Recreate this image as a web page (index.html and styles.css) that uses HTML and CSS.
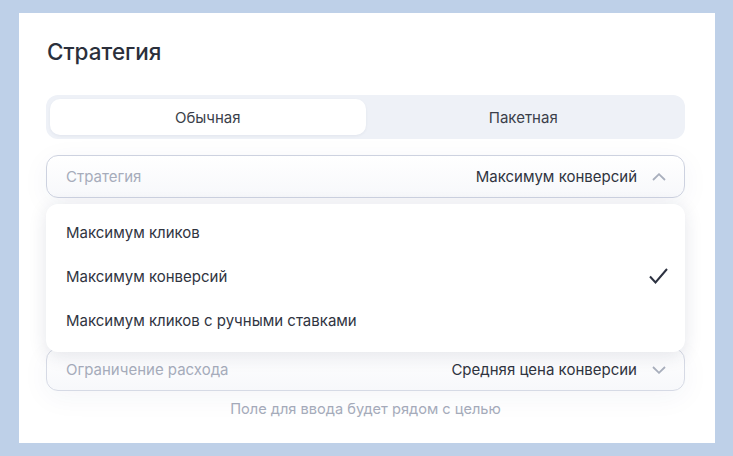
FILE: index.html
```html
<!DOCTYPE html>
<html lang="ru">
<head>
    <meta charset="UTF-8">
    <meta name="viewport" content="width=device-width, initial-scale=1.0">
    <title>Стратегия</title>
    <link rel="stylesheet" href="styles.css">
</head>
<body>
    <div class="card">
        <h1 class="title">Стратегия</h1>

        <div class="segment">
            <button class="segment-tab active">Обычная</button>
            <button class="segment-tab">Пакетная</button>
        </div>

        <div class="fields">
            <div class="select open">
                <span class="select-label">Стратегия</span>
                <span class="select-value">Максимум конверсий</span>
                <svg class="chevron" width="14" height="8" viewBox="0 0 14 8"><path d="M1 7L7 1.2L13 7" fill="none" stroke="#a9afbd" stroke-width="1.8"/></svg>
            </div>

            <div class="dropdown">
                <div class="option">Максимум кликов</div>
                <div class="option selected">
                    Максимум конверсий
                    <svg class="check" width="19" height="16" viewBox="0 0 19 16"><path d="M1 8.5L6.5 14.5L18 1" fill="none" stroke="#2c3140" stroke-width="2"/></svg>
                </div>
                <div class="option">Максимум кликов с ручными ставками</div>
            </div>

            <div class="goal-slot"></div>

            <div class="select">
                <span class="select-label">Ограничение расхода</span>
                <span class="select-value">Средняя цена конверсии</span>
                <svg class="chevron" width="14" height="8" viewBox="0 0 14 8"><path d="M1 1L7 6.8L13 1" fill="none" stroke="#a9afbd" stroke-width="1.8"/></svg>
            </div>
        </div>

        <p class="hint">Поле для ввода будет рядом с целью</p>
    </div>
</body>
</html>
```

FILE: styles.css
```css
body {
    margin: 0;
    background-color: #bed0e8;
    font-family: 'Inter', 'Noto Sans', sans-serif;
    color: #30343f;
}
.card {
    margin: 13px 18px 0 19px;
    height: 430px;
    box-sizing: border-box;
    padding: 24px 30px 0 27px;
    background-color: #ffffff;
}
.title {
    margin: 0 0 28px 1px;
    font-size: 22.5px;
    line-height: 30px;
    font-weight: 500;
    color: #2b2f3b;
}
.segment {
    display: flex;
    padding: 4px;
    height: 44px;
    box-sizing: border-box;
    border-radius: 12px;
    background-color: #eef1f7;
}
.segment-tab {
    flex: 1;
    border: none;
    border-radius: 10px;
    background: transparent;
    font-family: inherit;
    font-size: 15px;
    color: #3b3f4a;
    cursor: pointer;
}
.segment-tab.active {
    background-color: #ffffff;
    box-shadow: 0 1px 3px rgba(40, 50, 80, 0.06);
}
.fields {
    position: relative;
    display: flex;
    flex-direction: column;
    gap: 16px;
    margin-top: 16px;
}
.select {
    display: flex;
    align-items: center;
    height: 43px;
    box-sizing: border-box;
    padding: 0 18px 0 19px;
    border: 1px solid #d6dae5;
    border-radius: 12px;
    background: linear-gradient(#ffffff, #f7f8fb);
    box-shadow: 0 6px 28px rgba(40, 60, 110, 0.05);
    font-size: 15px;
}
.select.open {
    border-color: #cdd2e0;
}
.select-label {
    flex: 1;
    color: #a6acbb;
}
.select-value {
    color: #30343f;
}
.chevron {
    margin-left: 15px;
}
.goal-slot {
    height: 118px;
}
.dropdown {
    position: absolute;
    top: 49px;
    left: 0;
    right: 0;
    z-index: 2;
    padding: 6px 0 10px;
    border-radius: 12px;
    background-color: #ffffff;
    box-shadow: 0 4px 18px rgba(30, 45, 80, 0.12);
}
.option {
    display: flex;
    align-items: center;
    justify-content: space-between;
    height: 44px;
    padding: 0 17px 0 20px;
    font-size: 15px;
    color: #30343f;
}
.hint {
    margin: 9px 0 0;
    text-align: center;
    font-size: 14.6px;
    color: #a6acbb;
}
```
